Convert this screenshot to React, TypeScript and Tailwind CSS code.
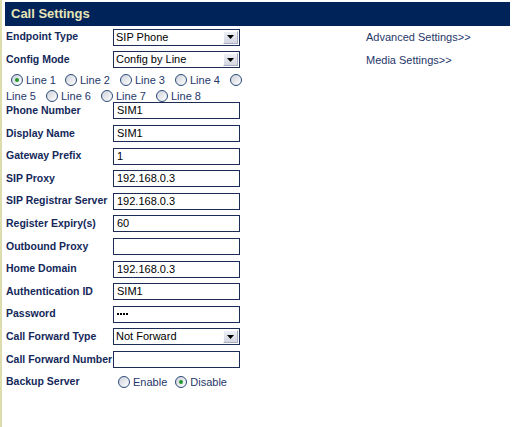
import React from "react";

const F = { fontFamily: '"Liberation Sans", Arial, sans-serif' };

function Radio({ checked }: { checked?: boolean }) {
  return (
    <span className="relative inline-block w-[12px] h-[12px] shrink-0 rounded-full border border-[#2b4a78] bg-[linear-gradient(135deg,#cdd1da,#ffffff)]">
      {checked && (
        <span className="absolute left-[3px] top-[3px] w-[4px] h-[4px] rounded-full bg-[#1f9a2a]" />
      )}
    </span>
  );
}

function RadioItem({ label, checked, className = "" }: { label: string; checked?: boolean; className?: string }) {
  return (
    <span className={"inline-flex items-center " + className}>
      <Radio checked={checked} />
      <span className="ml-[3px] text-[11px] text-[#26376a]">{label}</span>
    </span>
  );
}

function TextBox({ value, password }: { value: string; password?: boolean }) {
  return (
    <div className="w-[127px] h-[17px] border border-[#1d2c55] bg-white flex items-center pl-[3px] overflow-hidden">
      {password ? (
        <span className="flex gap-[1px]">
          <span className="w-[2px] h-[2px] bg-black" />
          <span className="w-[2px] h-[2px] bg-black" />
          <span className="w-[2px] h-[2px] bg-black" />
          <span className="w-[2px] h-[2px] bg-black" />
        </span>
      ) : (
        <span className="text-[11px] leading-none text-black">{value}</span>
      )}
    </div>
  );
}

function Select({ value }: { value: string }) {
  return (
    <div className="w-[127px] h-[17px] border border-[#1d2c55] bg-white flex items-center pl-[2px] relative">
      <span className="text-[11px] leading-none text-black">{value}</span>
      <div className="absolute right-[1px] top-[1px] w-[15px] h-[13px] border border-t-[#ffffff] border-l-[#ffffff] border-r-[#a8aebf] border-b-[#a8aebf] bg-[linear-gradient(180deg,#eef0f5,#d4d7e2)] flex items-center justify-center">
        <svg width="7" height="4" viewBox="0 0 7 4">
          <polygon points="0,0 7,0 3.5,4" fill="#000" />
        </svg>
      </div>
    </div>
  );
}

function Row({ label, children, right }: { label: string; children: React.ReactNode; right?: string }) {
  return (
    <div className="flex items-center h-[22.6px]">
      <div className="w-[107px] shrink-0 text-[10.5px] font-bold text-[#14285a] whitespace-nowrap">{label}</div>
      {children}
      {right && <div className="ml-[126px] text-[11px] text-[#26376a] whitespace-nowrap">{right}</div>}
    </div>
  );
}

export default function App() {
  return (
    <div style={F} className="w-[512px] h-[427px] bg-white border-l-2 border-[#dcdcac] overflow-hidden">
      <div className="ml-[3px] mt-[2px] w-[505px] h-[24px] bg-[#00245a] flex items-center pl-[6px]">
        <span className="text-[13px] font-bold text-[#e8e4b8]">Call Settings</span>
      </div>
      <div className="pl-[4px]">
        <Row label="Endpoint Type" right="Advanced Settings>>">
          <Select value="SIP Phone" />
        </Row>
        <Row label="Config Mode" right="Media Settings>>">
          <Select value="Config by Line" />
        </Row>
        <div className="h-[28.5px] pt-[1px] leading-[16px]">
          <div className="flex items-center h-[16px] pl-[5px]">
            <RadioItem label="Line 1" checked />
            <RadioItem label="Line 2" className="ml-[9px]" />
            <RadioItem label="Line 3" className="ml-[10px]" />
            <RadioItem label="Line 4" className="ml-[10px]" />
            <span className="ml-[10px] inline-flex"><Radio /></span>
          </div>
          <div className="flex items-center h-[16px]">
            <span className="text-[11px] text-[#26376a]">Line 5</span>
            <RadioItem label="Line 6" className="ml-[10px]" />
            <RadioItem label="Line 7" className="ml-[10px]" />
            <RadioItem label="Line 8" className="ml-[10px]" />
          </div>
        </div>
        <Row label="Phone Number"><TextBox value="SIM1" /></Row>
        <Row label="Display Name"><TextBox value="SIM1" /></Row>
        <Row label="Gateway Prefix"><TextBox value="1" /></Row>
        <Row label="SIP Proxy"><TextBox value="192.168.0.3" /></Row>
        <Row label="SIP Registrar Server"><TextBox value="192.168.0.3" /></Row>
        <Row label="Register Expiry(s)"><TextBox value="60" /></Row>
        <Row label="Outbound Proxy"><TextBox value="" /></Row>
        <Row label="Home Domain"><TextBox value="192.168.0.3" /></Row>
        <Row label="Authentication ID"><TextBox value="SIM1" /></Row>
        <Row label="Password"><TextBox value="" password /></Row>
        <Row label="Call Forward Type"><Select value="Not Forward" /></Row>
        <Row label="Call Forward Number"><TextBox value="" /></Row>
        <Row label="Backup Server">
          <div className="flex items-center pl-[5px]">
            <RadioItem label="Enable" />
            <RadioItem label="Disable" checked className="ml-[8px]" />
          </div>
        </Row>
      </div>
    </div>
  );
}
